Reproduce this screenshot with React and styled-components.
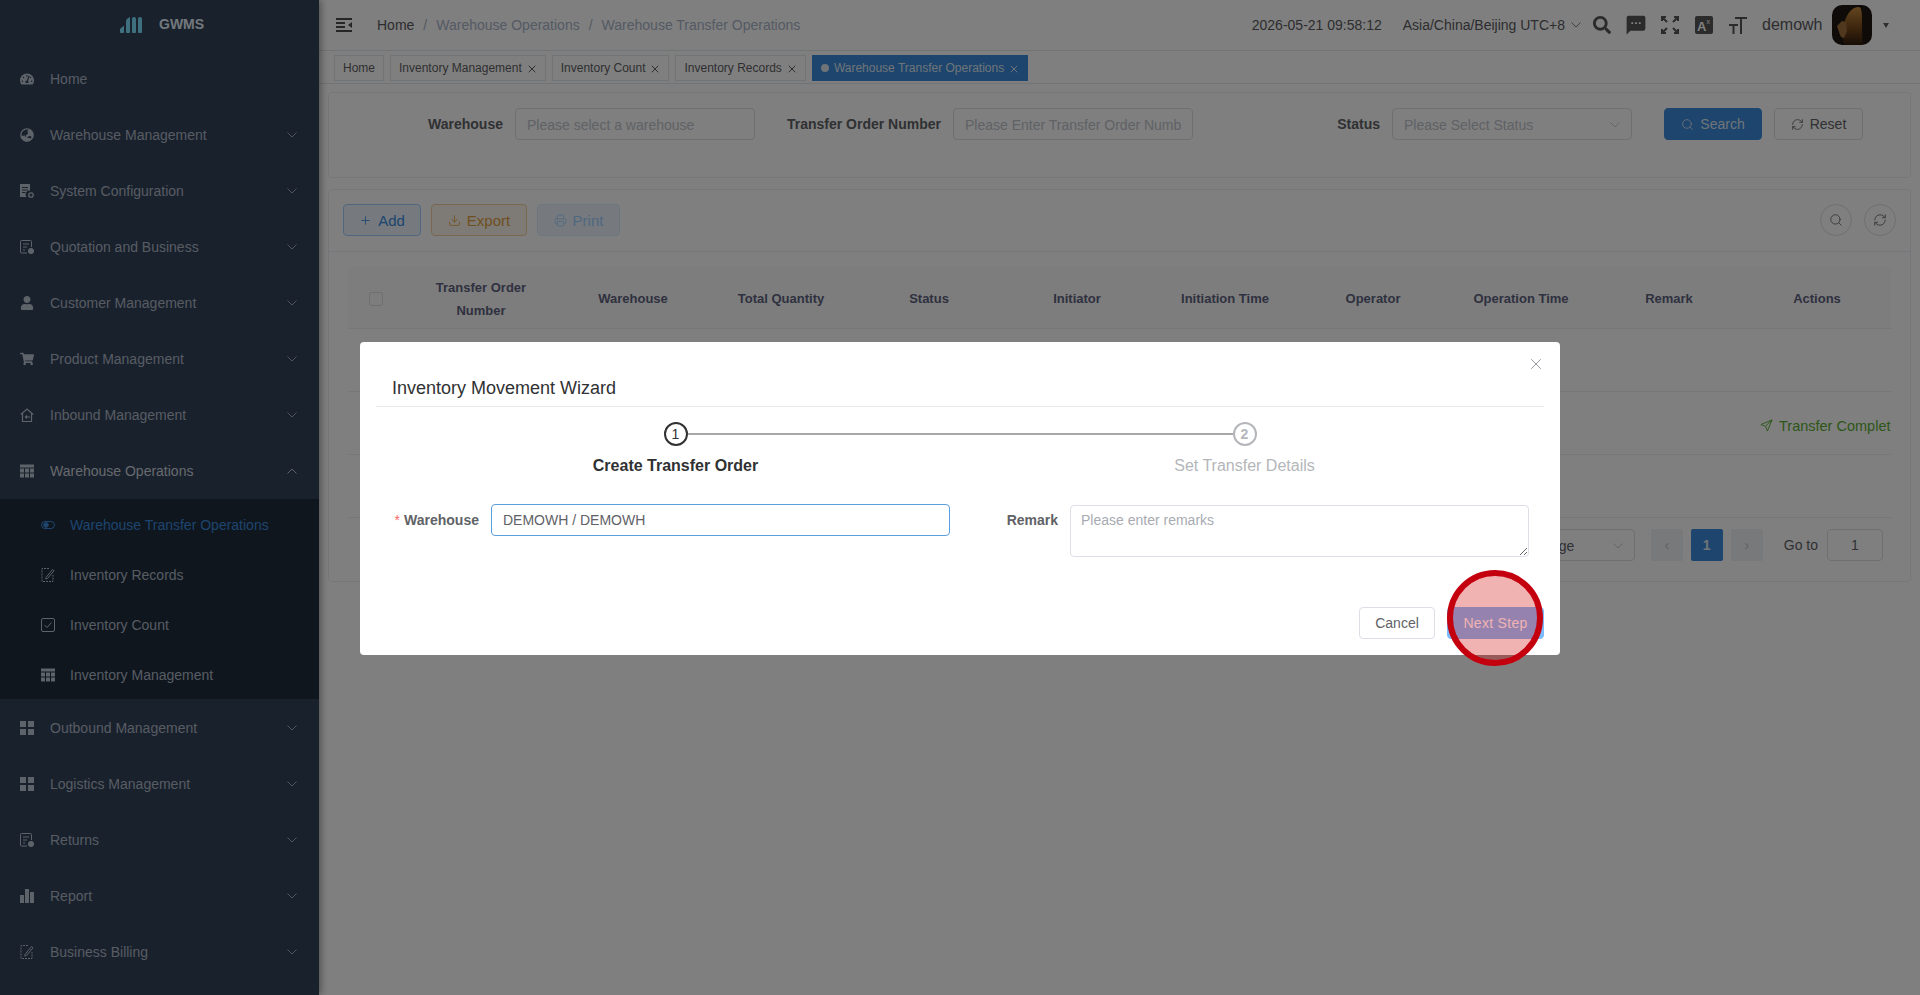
import React from 'react';
import styled, { createGlobalStyle } from 'styled-components';
import {
  FaTachometerAlt,
  FaGlobeAsia,
  FaUser,
  FaShoppingCart,
  FaSearch,
} from 'react-icons/fa';
import { MdSms } from 'react-icons/md';
import { Plus, Printer, RefreshCw, Search as SearchLine, Download, X } from 'lucide-react';

const GlobalStyle = createGlobalStyle`
  html, body {
    margin: 0;
    height: 100%;
    overflow: hidden;
    background: #fff;
    font-family: "Liberation Sans", Arial, sans-serif;
    font-size: 14px;
  }
  * { box-sizing: border-box; }
`;

const Page = styled.div`
  display: flex;
  width: 1920px;
  height: 995px;
  overflow: hidden;
`;

/* sidebar */
const Sidebar = styled.aside`
  flex: 0 0 319px;
  background: #324259;
  box-shadow: 2px 0 7px rgba(0, 0, 0, 0.38);
  position: relative;
  z-index: 1;
`;

const Logo = styled.div`
  height: 50px;
  display: flex;
  align-items: flex-start;
  padding: 17px 0 0 120px;
  gap: 17px;
  color: #e5f0fa;
  font-size: 14px;
  font-weight: 700;
  line-height: 15px;
`;

const NavRow = styled.div`
  height: 56px;
  display: flex;
  align-items: center;
  padding: 1px 22px 0 20px;
  color: ${p => (p.$open ? '#cdd3dd' : '#aeb8c6')};
  font-size: 14px;
`;

const NavIcon = styled.span`
  flex: 0 0 14px;
  width: 14px;
  height: 14px;
  margin-right: 16px;
  display: flex;
  color: #bcc5d2;
  svg { width: 14px; height: 14px; }
`;

const NavText = styled.span`
  flex: 1;
`;

const SubMenu = styled.div`
  margin-top: 1px;
  background: #1f2d3d;
`;

const SubRow = styled.div`
  height: 50px;
  display: flex;
  align-items: center;
  padding: 1px 0 0 41px;
  color: ${p => (p.$active ? '#3b8adb' : '#aeb8c6')};
  font-size: 14px;
`;

const SubIcon = styled.span`
  flex: 0 0 14px;
  height: 14px;
  margin-right: 15px;
  display: flex;
  color: ${p => (p.$active ? '#3b8adb' : '#bcc5d2')};
  svg { width: 14px; height: 14px; }
`;

/* main column */
const Main = styled.main`
  flex: 1;
  min-width: 0;
  display: flex;
  flex-direction: column;
`;

const Header = styled.header`
  height: 51px;
  border-bottom: 1px solid #e2e8e8;
  display: flex;
  align-items: center;
  padding: 0 31px 0 17px;
  color: #5a5a5e;
`;

const Crumbs = styled.nav`
  display: flex;
  align-items: center;
  margin-left: 25px;
  gap: 9px;
`;

const Crumb = styled.span`
  color: ${p => (p.$link ? '#5a5a5e' : '#a9b4c8')};
`;

const CrumbSep = styled.span`
  color: #a9b4c8;
`;

const HeaderRight = styled.div`
  margin-left: auto;
  display: flex;
  align-items: center;
`;

const Clock = styled.span`
  margin-right: 21px;
`;

const Zone = styled.span`
  display: flex;
  align-items: center;
  gap: 6px;
  margin-right: 12px;
`;

const ToolIcons = styled.div`
  display: flex;
  gap: 16px;
  margin-right: 15px;
`;

const ToolIcon = styled.span`
  width: 18px;
  height: 18px;
  display: flex;
  color: #565656;
  svg { width: 18px; height: 18px; }
`;

const ChatIcon = styled(MdSms)`
  transform: scale(1.25);
`;

const UserName = styled.span`
  font-size: 16px;
  margin-right: 9px;
  width: 61px;
`;

const Caret = styled.span`
  width: 0;
  height: 0;
  margin-left: 11px;
  border-left: 3px solid transparent;
  border-right: 3px solid transparent;
  border-top: 5px solid #5c5c5c;
`;

const Tags = styled.div`
  height: 33px;
  border-bottom: 1px solid #e2e8ec;
  padding: 4px 0 0 15px;
  display: flex;
  gap: 6px;
  align-items: flex-start;
`;

const Tag = styled.div`
  height: 26px;
  display: flex;
  align-items: center;
  padding: 0 8px;
  font-size: 12px;
  border: 1px solid ${p => (p.$active ? '#3b8adb' : '#e2e8ee')};
  background: ${p => (p.$active ? '#3b8adb' : 'transparent')};
  color: ${p => (p.$active ? '#dfe8f2' : '#5e5e62')};
`;

const TagDot = styled.span`
  width: 8px;
  height: 8px;
  border-radius: 50%;
  background: #dfe8f2;
  margin-right: 5px;
`;

const TagClose = styled(X)`
  width: 12px;
  height: 12px;
  margin-left: 4px;
  margin-top: 2px;
  margin-right: -1px;
`;

const Content = styled.div`
  padding: 8px 9px 0;
  display: flex;
  flex-direction: column;
  gap: 11px;
`;

const Card = styled.section`
  border: 1px solid #ebeef5;
  border-radius: 4px;
`;

const SearchForm = styled(Card)`
  height: 86px;
  padding-top: 15px;
  display: flex;
  align-items: flex-start;
`;

const FieldLabel = styled.label`
  width: ${p => p.$w}px;
  margin-right: 12px;
  height: 32px;
  line-height: 32px;
  text-align: right;
  font-weight: 700;
  color: #606266;
  white-space: nowrap;
`;

const Input = styled.input`
  width: ${p => (p.$w ? `${p.$w}px` : '100%')};
  height: 32px;
  padding: ${p => (p.$focus ? 0 : 2)}px 11px 0;
  border: 1px solid ${p => (p.$focus ? '#5c9fe0' : '#dcdfe6')};
  border-radius: 4px;
  background: #fff;
  font: inherit;
  color: #606266;
  outline: none;
  &::placeholder { color: #c0c4cc; opacity: 1; }
`;

const Select = styled.div`
  width: ${p => p.$w}px;
  height: 32px;
  margin-right: ${p => p.$mr || 0}px;
  padding: 2px 11px 0 ${p => p.$pl || 11}px;
  border: 1px solid #dcdfe6;
  border-radius: 4px;
  color: ${p => p.$color || '#c0c4cc'};
  display: flex;
  align-items: center;
  justify-content: space-between;
`;

const Btn = styled.button`
  height: 32px;
  padding: 0;
  width: ${p => p.$w}px;
  margin-left: ${p => p.$ml || 0}px;
  border: 1px solid ${p => p.$border || '#dcdfe6'};
  border-radius: 4px;
  background: ${p => p.$bg || '#fff'};
  color: ${p => p.$color || '#606266'};
  font: inherit;
  font-size: ${p => p.$fs || 14}px;
  letter-spacing: ${p => p.$spread || 0}px;
  display: inline-flex;
  align-items: center;
  justify-content: center;
  gap: 6px;
  svg { width: 13px; height: 13px; stroke-width: 1.5; }
`;

const Toolbar = styled.div`
  height: 62px;
  border-bottom: 1px solid #ebeef5;
  padding: 14px 14px 0 14px;
  display: flex;
  gap: 10px;
`;

const RoundBtn = styled.button`
  width: 32px;
  height: 32px;
  padding: 0;
  border: 1px solid #dcdfe6;
  border-radius: 50%;
  background: #fff;
  color: #606266;
  display: flex;
  align-items: center;
  justify-content: center;
  margin-left: ${p => (p.$push ? 'auto' : '2px')};
  svg { width: 14px; height: 14px; stroke-width: 1.4; }
`;

const TableWrap = styled.div`
  padding: 15px 19px 0;
`;

const TableRow = styled.div`
  display: grid;
  grid-template-columns: 55px 156px repeat(9, 148px);
  height: ${p => (p.$head ? 62 : 63)}px;
  border-bottom: 1px solid #ebeef5;
  background: ${p => (p.$head ? '#fbfbfb' : 'transparent')};
`;

const HeadCell = styled.div`
  display: flex;
  align-items: center;
  justify-content: center;
  text-align: center;
  padding: 2px 24px 0;
  font-size: 13px;
  font-weight: 700;
  line-height: 23px;
  color: #5e6280;
`;

const CheckBox = styled.span`
  width: 14px;
  height: 14px;
  border: 1px solid #dcdfe6;
  border-radius: 2px;
  flex: 0 0 14px;
`;

const ActionCell = styled.div`
  grid-column: 11;
  overflow: hidden;
  display: flex;
  align-items: center;
  padding: 5px 0 0 17px;
  white-space: nowrap;
  font-size: 14.5px;
  color: #5aad33;
  gap: 6px;
  svg { flex: 0 0 13px; width: 13px; height: 13px; }
`;

const Pager = styled.div`
  display: flex;
  justify-content: flex-end;
  align-items: center;
  padding: 11px 27px 20px 0;
  color: #606266;
`;

const PagerBtn = styled.span`
  width: 32px;
  height: 32px;
  margin-right: 8px;
  border-radius: 2px;
  background: ${p => (p.$active ? '#3b8adb' : '#f0f2f5')};
  color: ${p => (p.$active ? '#dfe8f2' : '#c0c4cc')};
  font-weight: ${p => (p.$active ? 700 : 400)};
  display: flex;
  align-items: center;
  justify-content: center;
`;

const GoTo = styled.span`
  margin: 0 9px 0 13px;
`;

const GoInput = styled.span`
  width: 56px;
  height: 32px;
  border: 1px solid #dcdfe6;
  border-radius: 4px;
  display: flex;
  align-items: center;
  justify-content: center;
`;

/* dialog */
const Mask = styled.div`
  position: fixed;
  inset: 0;
  z-index: 10;
  background: rgba(0, 0, 0, 0.5);
  padding-top: 342px;
  display: flex;
  justify-content: center;
  align-items: flex-start;
`;

const Dialog = styled.div`
  position: relative;
  width: 1200px;
  height: 313px;
  background: #fff;
  border-radius: 4px;
  color: #303133;
`;

const DialogHead = styled.div`
  height: 65px;
  margin: 0 16px;
  padding: 34px 0 0 16px;
  border-bottom: 1px solid #e8eaed;
  font-size: 18px;
  line-height: 24px;
`;

const Close = styled(X)`
  position: absolute;
  top: 13px;
  right: 15px;
  width: 18px;
  height: 18px;
  color: #8b8e94;
  stroke-width: 1.2;
`;

const Steps = styled.div`
  display: grid;
  grid-template-columns: 1fr 1fr;
  padding: 15px 31px 0;
`;

const Step = styled.div`
  position: relative;
  display: flex;
  flex-direction: column;
  align-items: center;
  color: ${p => (p.$on ? '#303133' : '#b4b6ba')};
  font-size: 16px;
  font-weight: ${p => (p.$on ? 700 : 400)};
  &:first-child::after {
    content: '';
    position: absolute;
    top: 11px;
    left: calc(50% + 12px);
    width: calc(100% - 24px);
    height: 2px;
    background: #a8a8a8;
  }
`;

const StepNo = styled.span`
  width: 24px;
  height: 24px;
  border-radius: 50%;
  border: 2px solid ${p => (p.$on ? '#303133' : '#b4b6ba')};
  font-size: 14px;
  font-weight: ${p => (p.$on ? 400 : 700)};
  display: flex;
  align-items: center;
  justify-content: center;
  margin-bottom: 9px;
`;

const StepName = styled.span`
  line-height: 22px;
`;

const FormRow = styled.div`
  display: flex;
  padding: 27px 31px 0 32px;
`;

const FormItem = styled.div`
  flex: ${p => (p.$w ? `0 0 ${p.$w}px` : '1')};
  display: flex;
`;

const FormLabel = styled.label`
  flex: 0 0 ${p => p.$w}px;
  margin-right: 12px;
  text-align: right;
  line-height: 32px;
  font-weight: 700;
  color: #606266;
  white-space: nowrap;
  em { color: #f56c6c; font-style: normal; font-weight: 400; margin-right: 4px; }
`;

const Area = styled.textarea`
  flex: 1;
  height: 52px;
  margin-top: 1px;
  padding: 6px 10px;
  border: 1px solid #dcdfe6;
  border-radius: 4px;
  font: inherit;
  outline: none;
  &::placeholder { color: #a8abb2; opacity: 1; }
`;

const Footer = styled.div`
  position: absolute;
  right: 16px;
  bottom: 16px;
  display: flex;
  gap: 12px;
`;

const Highlight = styled.span`
  position: absolute;
  right: 17px;
  bottom: -11px;
  width: 96px;
  height: 96px;
  border-radius: 50%;
  border: 6px solid #c4000f;
  background: rgba(210, 0, 0, 0.3);
`;

const AvatarPic = styled.svg`
  flex: 0 0 40px;
  border-radius: 10px;
`;

const chevron = (up, color) => (
  <svg width="10" height="6" viewBox="0 0 10 6" fill="none" stroke={color} strokeWidth="0.9">
    <path d={up ? 'M.5 5.500 5 1l4.500 4.500' : 'M.5.5 5 5 9.500.5'} />
  </svg>
);

const LogoMark = () => (
  <svg width="22" height="16" viewBox="0 0 22 16" fill="#7ee0ff">
    <path d="M0 14.500V12l4-3.500v6a2 2 0 0 1-4 0z" />
    <path d="M6 14.500V4c0-2 4-4 4-4v14.500a2 2 0 0 1-4 0z" />
    <path d="M12 14.500V2a2 2 0 0 1 4 0v12.500a2 2 0 0 1-4 0z" />
    <path d="M18 14.500V2a2 2 0 0 1 4 0v12.500a2 2 0 0 1-4 0z" />
  </svg>
);

const GridTable = () => (
  <svg viewBox="0 0 14 13" fill="currentColor">
    <path d="M0 0h14v3H0zM0 4h4v4H0zM5 4h4v4H5zM10 4h4v4h-4zM0 9h4v4H0zM5 9h4v4H5zM10 9h4v4h-4z" />
  </svg>
);

const Squares = () => (
  <svg viewBox="0 0 14 14" fill="currentColor">
    <path d="M0 0h6v6H0zM8 0h6v6H8zM0 8h6v6H0zM8 8h6v6H8z" />
  </svg>
);

const Bars = () => (
  <svg viewBox="0 0 14 14" fill="currentColor">
    <path d="M0 6h4v8H0zM5 0h4v14H5zM10 3h4v11h-4z" />
  </svg>
);

const DocGear = () => (
  <svg viewBox="0 0 14 14" fill="currentColor">
    <path d="M0 0h10v6.500A4 4 0 0 0 6.500 13H0zM2 3v1h6V3zm0 2.500v1h6v-1zM2 8v1h3.500V8z" fillRule="evenodd" />
    <circle cx="11" cy="11" r="2.200" fill="none" stroke="currentColor" strokeWidth="1.300" />
  </svg>
);

const DocPerson = () => (
  <svg viewBox="0 0 14 14" fill="none" stroke="currentColor">
    <path d="M7 13H1.500a1 1 0 0 1-1-1V1.500a1 1 0 0 1 1-1h9a1 1 0 0 1 1 1V7M3 4h6M3 7h4M3 10h2" />
    <circle cx="11" cy="11" r="2.600" fill="currentColor" />
  </svg>
);

const HouseIn = () => (
  <svg viewBox="0 0 14 14" fill="none" stroke="currentColor" strokeWidth="1.200">
    <path d="M.8 6.500 7 1l6.200 5.500M2.500 5.500v8h9v-8" />
    <path d="M10 9H5.500M7 7.500 5.500 9 7 10.500" />
  </svg>
);

const EditDoc = () => (
  <svg viewBox="0 0 14 14" fill="none" stroke="currentColor">
    <path d="M8 .5H1v13h11V7" strokeDasharray="2 1" />
    <path d="M5 9.500 11.500 1.500l1.500 1.300L6.500 10.500 4.800 11z" />
  </svg>
);

const Toggle = () => (
  <svg viewBox="0 0 14 14" fill="none" stroke="currentColor">
    <rect x=".5" y="3.500" width="13" height="7" rx="3.500" />
    <circle cx="5" cy="7" r="2.300" fill="currentColor" />
  </svg>
);

const CheckDoc = () => (
  <svg viewBox="0 0 14 14" fill="none" stroke="currentColor">
    <rect x=".5" y=".5" width="13" height="13" rx="1.500" />
    <path d="m3.500 7 2.500 2.500 4.500-5" />
  </svg>
);

const MenuFold = () => (
  <svg width="16" height="14" viewBox="0 0 16 14" fill="#4c4c4c">
    <path d="M0 0h16v2H0zM0 4h9v2H0zM0 8h9v2H0zM0 12h16v2H0zM16 4v6l-4-3z" />
  </svg>
);

const Expand = () => (
  <svg viewBox="0 0 18 18" fill="none" stroke="currentColor" strokeWidth="2">
    <path d="M1 5V1h4M13 1h4v4M17 13v4h-4M5 17H1v-4M1.500 1.500 6 6M16.500 1.500 12 6M16.500 16.500 12 12M1.500 16.500 6 12" />
  </svg>
);

const Translate = () => (
  <svg viewBox="0 0 18 18">
    <rect width="18" height="18" rx="2" fill="#565656" />
    <text x="2" y="15" fontSize="13" fontWeight="700" fill="#fff" fontFamily="Liberation Sans">A</text>
    <text x="11.500" y="8" fontSize="7" fill="#fff" fontFamily="Liberation Sans">x</text>
  </svg>
);

// small T beside a tall T
const FontSizeIcon = () => (
  <svg viewBox="0 0 18 18" fill="currentColor">
    <path d="M6 1h12v2h-5v15h-2V3H6zM0 8h9v2H5.500v8h-2v-8H0z" />
  </svg>
);

const Send = () => (
  <svg viewBox="0 0 14 14" fill="none" stroke="currentColor">
    <path d="M13 1 1 6l5 1.800L8 13zM13 1 6 7.800" />
  </svg>
);

const Avatar = () => (
  <AvatarPic width="40" height="40" viewBox="0 0 40 40">
    <defs>
      <linearGradient id="mane" x1="0" y1="0" x2="0" y2="1">
        <stop offset="0" stopColor="#c88d3e" />
        <stop offset="0.55" stopColor="#7a4a1c" />
        <stop offset="1" stopColor="#2e1c0c" />
      </linearGradient>
    </defs>
    <rect width="40" height="40" fill="#1c1611" />
    <path d="M12 40C11 30 10 22 13 15 16 8 20 2 27 2c3 1 3 7 3 13 0 10 0 18 1 25z" fill="url(#mane)" />
    <path d="M5 21l5-5 4 1 1 9-3 7c-3 0-4-3-5-6z" fill="#a0713f" />
  </AvatarPic>
);

const menuTop = [
  { name: 'Home', icon: <FaTachometerAlt />, leaf: true },
  { name: 'Warehouse Management', icon: <FaGlobeAsia /> },
  { name: 'System Configuration', icon: <DocGear /> },
  { name: 'Quotation and Business', icon: <DocPerson /> },
  { name: 'Customer Management', icon: <FaUser /> },
  { name: 'Product Management', icon: <FaShoppingCart /> },
  { name: 'Inbound Management', icon: <HouseIn /> },
];

const subMenu = [
  { name: 'Warehouse Transfer Operations', icon: <Toggle />, active: true },
  { name: 'Inventory Records', icon: <EditDoc /> },
  { name: 'Inventory Count', icon: <CheckDoc /> },
  { name: 'Inventory Management', icon: <GridTable /> },
];

const menuBottom = [
  { name: 'Outbound Management', icon: <Squares /> },
  { name: 'Logistics Management', icon: <Squares /> },
  { name: 'Returns', icon: <DocPerson /> },
  { name: 'Report', icon: <Bars /> },
  { name: 'Business Billing', icon: <EditDoc /> },
];

const columns = [
  'Transfer Order Number',
  'Warehouse',
  'Total Quantity',
  'Status',
  'Initiator',
  'Initiation Time',
  'Operator',
  'Operation Time',
  'Remark',
  'Actions',
];

const tags = ['Inventory Management', 'Inventory Count', 'Inventory Records'];

const renderNav = item => (
  <NavRow key={item.name}>
    <NavIcon>{item.icon}</NavIcon>
    <NavText>{item.name}</NavText>
    {!item.leaf && chevron(false, '#aeb8c6')}
  </NavRow>
);

export default function App() {
  return (
    <>
      <GlobalStyle />
      <Page>
        <Sidebar>
          <Logo>
            <LogoMark />
            GWMS
          </Logo>
          {menuTop.map(renderNav)}
          <NavRow $open>
            <NavIcon><GridTable /></NavIcon>
            <NavText>Warehouse Operations</NavText>
            {chevron(true, '#cdd3dd')}
          </NavRow>
          <SubMenu>
            {subMenu.map(item => (
              <SubRow key={item.name} $active={item.active}>
                <SubIcon $active={item.active}>{item.icon}</SubIcon>
                {item.name}
              </SubRow>
            ))}
          </SubMenu>
          {menuBottom.map(renderNav)}
        </Sidebar>

        <Main>
          <Header>
            <MenuFold />
            <Crumbs>
              <Crumb $link>Home</Crumb>
              <CrumbSep>/</CrumbSep>
              <Crumb>Warehouse Operations</Crumb>
              <CrumbSep>/</CrumbSep>
              <Crumb>Warehouse Transfer Operations</Crumb>
            </Crumbs>
            <HeaderRight>
              <Clock>2026-05-21 09:58:12</Clock>
              <Zone>Asia/China/Beijing UTC+8 {chevron(false, '#747474')}</Zone>
              <ToolIcons>
                <ToolIcon><FaSearch /></ToolIcon>
                <ToolIcon><ChatIcon /></ToolIcon>
                <ToolIcon><Expand /></ToolIcon>
                <ToolIcon><Translate /></ToolIcon>
                <ToolIcon><FontSizeIcon /></ToolIcon>
              </ToolIcons>
              <UserName>demowh</UserName>
              <Avatar />
              <Caret />
            </HeaderRight>
          </Header>

          <Tags>
            <Tag>Home</Tag>
            {tags.map(t => (
              <Tag key={t}>{t}<TagClose /></Tag>
            ))}
            <Tag $active>
              <TagDot />
              Warehouse Transfer Operations
              <TagClose />
            </Tag>
          </Tags>

          <Content>
            <SearchForm>
              <FieldLabel $w={174}>Warehouse</FieldLabel>
              <Input $w={240} placeholder="Please select a warehouse" readOnly />
              <FieldLabel $w={186}>Transfer Order Number</FieldLabel>
              <Input $w={240} placeholder="Please Enter Transfer Order Number" readOnly />
              <FieldLabel $w={187}>Status</FieldLabel>
              <Select $w={240}>Please Select Status {chevron(false, '#c0c4cc')}</Select>
              <Btn $w={98} $ml={32} $bg="#3b8adb" $border="#3b8adb" $color="#dfe8f2">
                <SearchLine />Search
              </Btn>
              <Btn $w={89} $ml={12}><RefreshCw />Reset</Btn>
            </SearchForm>

            <Card>
              <Toolbar>
                <Btn $w={78} $fs={15} $bg="#ecf5ff" $border="#a0cfff" $color="#3b8adb"><Plus />Add</Btn>
                <Btn $w={96} $fs={15} $bg="#fdf6ec" $border="#f3d19e" $color="#e0a040"><Download />Export</Btn>
                <Btn $w={83} $fs={15} $bg="#ecf5ff" $border="#d9ecff" $color="#a0cfff"><Printer />Print</Btn>
                <RoundBtn $push><SearchLine /></RoundBtn>
                <RoundBtn><RefreshCw /></RoundBtn>
              </Toolbar>
              <TableWrap>
                <TableRow $head>
                  <HeadCell><CheckBox /></HeadCell>
                  {columns.map(c => <HeadCell key={c}>{c}</HeadCell>)}
                </TableRow>
                <TableRow />
                <TableRow>
                  <ActionCell><Send />Transfer Completed</ActionCell>
                </TableRow>
                <TableRow />
              </TableWrap>
              <Pager>
                <Select $w={128} $mr={16} $pl={16} $color="#606266">10/page {chevron(false, '#c0c4cc')}</Select>
                <PagerBtn>‹</PagerBtn>
                <PagerBtn $active>1</PagerBtn>
                <PagerBtn>›</PagerBtn>
                <GoTo>Go to</GoTo>
                <GoInput>1</GoInput>
              </Pager>
            </Card>
          </Content>
        </Main>
      </Page>

      <Mask>
        <Dialog>
          <DialogHead>Inventory Movement Wizard</DialogHead>
          <Close />
          <Steps>
            <Step $on>
              <StepNo $on>1</StepNo>
              <StepName>Create Transfer Order</StepName>
            </Step>
            <Step>
              <StepNo>2</StepNo>
              <StepName>Set Transfer Details</StepName>
            </Step>
          </Steps>
          <FormRow>
            <FormItem $w={558}>
              <FormLabel $w={87}><em>*</em>Warehouse</FormLabel>
              <Input $focus value="DEMOWH / DEMOWH" readOnly />
            </FormItem>
            <FormItem>
              <FormLabel $w={108}>Remark</FormLabel>
              <Area placeholder="Please enter remarks" />
            </FormItem>
          </FormRow>
          <Footer>
            <Btn $w={76} $border="#dcdfe6" $bg="#fff" $color="#606266">Cancel</Btn>
            <Btn $w={97} $border="#7bbbfb" $bg="#7bbbfb" $color="#fff" $spread={0.3}>Next Step</Btn>
          </Footer>
          <Highlight />
        </Dialog>
      </Mask>
    </>
  );
}
